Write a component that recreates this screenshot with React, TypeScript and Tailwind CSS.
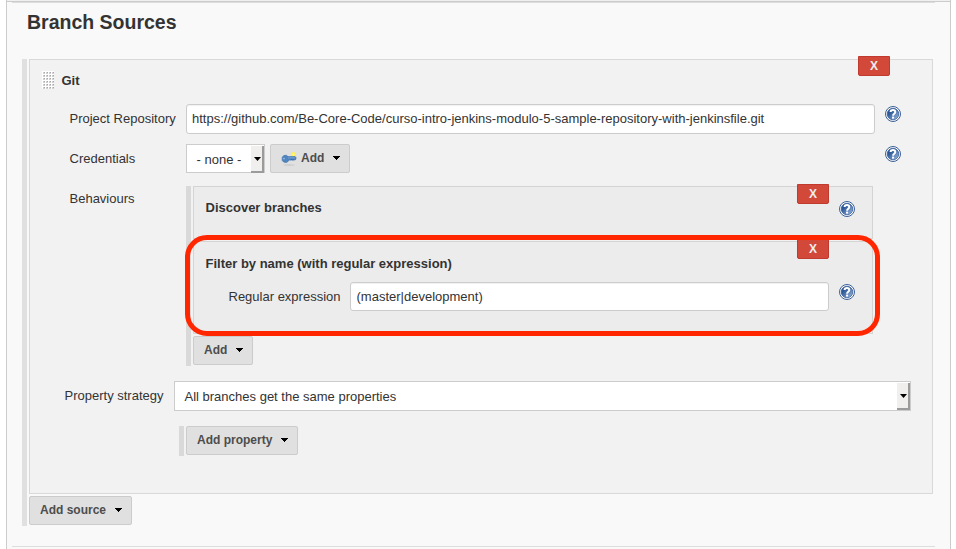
import React from "react";

function HelpIcon() {
  return (
    <svg width="16" height="16" viewBox="0 0 16 16" className="block shrink-0">
      <defs>
        <linearGradient id="help" x1="0" y1="0" x2="1" y2="1">
          <stop offset="0.3" stopColor="#2c5796" />
          <stop offset="1" stopColor="#9dbde3" />
        </linearGradient>
      </defs>
      <circle cx="8" cy="8" r="7.5" fill="#fff" stroke="#3a5f98" strokeWidth="1" />
      <circle cx="8" cy="8" r="5.8" fill="url(#help)" stroke="#2f5690" strokeWidth="0.7" />
      <path d="M5.6 6.1C5.6 3.4 10.3 3.4 10.3 6.1C10.3 7.8 8.1 7.8 8.1 9.7" fill="none" stroke="#fff" strokeWidth="2" />
      <rect x="7" y="10.6" width="2.1" height="2" fill="#fff" />
    </svg>
  );
}

function Caret() {
  return (
    <svg width="7" height="4" viewBox="0 0 7 4" shapeRendering="crispEdges" className="-mt-0.5 block shrink-0">
      <path d="M0 0H7V1H6V2H5V3H4V4H3V3H2V2H1V1H0Z" fill="#000" />
    </svg>
  );
}

function KeyIcon() {
  return (
    <svg width="16" height="16" viewBox="0 0 16 16" className="mr-1 block shrink-0">
      <ellipse cx="8" cy="14" rx="6" ry="0.8" fill="#cbcbcb" />
      <circle cx="12.4" cy="3.4" r="2.4" fill="#fbef55" />
      <circle cx="12.4" cy="3.4" r="1" fill="#fffca8" />
      <path d="M7 5.6H14.2L15 6.5V8L14.2 9H8.2L7 10.6L5 11.6L2.6 11L1.2 9.4V6.2L2.8 4.5L5.4 4.3Z" fill="#4f86c0" stroke="#3c6ca8" strokeWidth="0.6" />
      <path d="M7 6.9H14" stroke="#86aedb" strokeWidth="0.7" />
      <path d="M9.6 9.1L10.4 8.4L11.2 9.1L12 8.4L12.8 9.1" stroke="#2f5b93" strokeWidth="0.6" fill="none" />
      <circle cx="3" cy="7.6" r="0.8" fill="#a9c4e2" />
    </svg>
  );
}

function MenuButton({ label, className, icon }: { label: string; className: string; icon?: boolean }) {
  return (
    <button className={"flex h-[29px] shrink-0 items-center rounded-[2px] border border-[#ccc] bg-[#e0e0e0] pl-2.5 text-[12px] leading-4 font-bold text-[#4d4d4d] " + className}>
      {icon && <KeyIcon />}
      <span className="-mt-0.5 mr-[9px] whitespace-nowrap">{label}</span>
      <Caret />
    </button>
  );
}

function DeleteButton() {
  return (
    <button className="block h-5 w-8 rounded-b-[2px] border border-[#c03a30] bg-[#d24939] text-center text-[12px] leading-[18px] font-bold text-[#eee]">
      X
    </button>
  );
}

function SelectArrow() {
  return (
    <span className="mt-px flex h-[27px] w-[13px] shrink-0 border-r-2 border-b-2 border-[#9b9b9b] bg-[#f0efee] pt-[11px] pl-[3px]">
      <svg width="7" height="4" viewBox="0 0 7 4" className="block shrink-0">
        <path d="M0 0H7L3.5 4Z" fill="#000" />
      </svg>
    </span>
  );
}

export default function App() {
  return (
    <div
      className="relative h-[549px] w-[956px] overflow-hidden bg-white pl-1.5 text-[13px] leading-4 text-[#333]"
      style={{ fontFamily: '"Liberation Sans", Arial, sans-serif' }}
    >
      <main className="flex h-[549px] w-[945px] flex-col border-x border-[#ccc] bg-[#f9f9f9]">
        <div className="h-0.5 shrink-0 border-b border-[#ccc] bg-[#f0f0f0]" />
        <div className="ml-[5px] h-px w-[923px] shrink-0 bg-[#ddd]" />
        <h2 className="mt-[7px] ml-5 h-6 shrink-0 text-[19.5px] leading-6 font-bold">Branch Sources</h2>

        <section className="mt-[25px] ml-[15px] flex h-[467px] w-[911px] shrink-0 flex-col border-l-[5px] border-[#e0e0e0] pl-0.5">
          <div className="h-[435px] w-[904px] shrink-0 border border-[#d9d9d9] bg-[#f2f2f2]">
            <div className="flex h-11 pl-3">
              <svg width="13" height="18" className="mt-[11px] shrink-0">
                <defs>
                  <pattern id="grip" width="3" height="3" patternUnits="userSpaceOnUse">
                    <rect width="3" height="3" fill="#fff" />
                    <rect x="1" y="1" width="2" height="2" fill="#d0d0d0" />
                    <rect x="2" y="1" width="1" height="1" fill="#a8a8a8" />
                  </pattern>
                </defs>
                <rect width="12" height="18" fill="url(#grip)" />
              </svg>
              <span className="mt-[13px] ml-[6.5px] w-[796.5px] font-bold">Git</span>
              <div className="-mt-1">
                <DeleteButton />
              </div>
            </div>

            <div className="flex h-10">
              <label className="mt-[7px] ml-[39.5px] w-[116.5px] whitespace-nowrap">Project Repository</label>
              <div className="flex h-[30px] w-[689px] items-center rounded-[3px] border border-[#ccc] bg-white pb-px pl-[5px] shadow-[inset_0_1px_1px_rgba(0,0,0,0.06)]">
                https://github.com/Be-Core-Code/curso-intro-jenkins-modulo-5-sample-repository-with-jenkinsfile.git
              </div>
              <div className="mt-0.5 ml-2.5">
                <HelpIcon />
              </div>
            </div>

            <div className="flex h-[42px]">
              <label className="mt-[7px] ml-[39.5px] w-[116.5px]">Credentials</label>
              <div className="mr-[5px] flex h-[29px] w-[79px] shrink-0 border border-[#ccc] bg-white">
                <span className="mt-[7px] flex-1 pl-[9.5px] whitespace-nowrap">- none -</span>
                <SelectArrow />
              </div>
              <MenuButton label="Add" className="w-20" icon />
              <div className="mt-0.5 ml-[535px]">
                <HelpIcon />
              </div>
            </div>

            <div className="flex h-[195px]">
              <span className="mt-[5px] ml-[39.5px] w-[116.5px]">Behaviours</span>
              <div className="flex h-[180px] w-[689px] flex-col border-l-[5px] border-[#d9d9d9] pl-0.5">
                <div className="flex h-[53px] w-[680px] shrink-0 border border-[#d4d4d4] bg-[#ececec]">
                  <span className="mt-[13px] ml-[11.5px] w-[591.5px] font-bold">Discover branches</span>
                  <div className="-mt-[3px]">
                    <DeleteButton />
                  </div>
                  <div className="mt-3.5 ml-2.5">
                    <HelpIcon />
                  </div>
                </div>

                <div className="mt-0.5 h-[93px] w-[680px] shrink-0 border border-[#d4d4d4] bg-[#ececec]">
                  <div className="flex h-10">
                    <span className="mt-3.5 ml-[11.5px] w-[591.5px] font-bold">Filter by name (with regular expression)</span>
                    <div className="-mt-[3px]">
                      <DeleteButton />
                    </div>
                  </div>
                  <div className="flex">
                    <label className="mt-[7px] ml-[34.5px] w-[121.5px] whitespace-nowrap">Regular expression</label>
                    <div className="flex h-[29px] w-[479px] items-center rounded-[3px] border border-[#ccc] bg-white pl-[5.5px] shadow-[inset_0_1px_1px_rgba(0,0,0,0.06)]">
                      (master|development)
                    </div>
                    <div className="mt-0.5 ml-2.5">
                      <HelpIcon />
                    </div>
                  </div>
                </div>
                <MenuButton label="Add" className="mt-0.5 w-[60px]" />
              </div>
            </div>

            <div className="flex h-[45px]">
              <label className="mt-[7px] ml-[34.5px] w-[109.5px] whitespace-nowrap">Property strategy</label>
              <div className="flex h-[30px] w-[737px] border border-[#ccc] bg-white">
                <span className="mt-[7px] flex-1 pl-[9.5px]">All branches get the same properties</span>
                <SelectArrow />
              </div>
            </div>

            <div className="ml-[149px] h-[30px] border-l-[5px] border-[#d9d9d9] pl-0.5">
              <MenuButton label="Add property" className="w-28" />
            </div>
          </div>
          <MenuButton label="Add source" className="mt-0.5 w-[103px]" />
        </section>
        <div className="mt-5 ml-[5px] h-px w-[923px] shrink-0 bg-[#ddd]" />
      </main>

      {/* Annotation ring around the regex filter */}
      <div className="pointer-events-none absolute top-[235px] left-[185px] h-[101px] w-[695px] rounded-[22px] border-[5px] border-[#ff2600]" />
    </div>
  );
}
